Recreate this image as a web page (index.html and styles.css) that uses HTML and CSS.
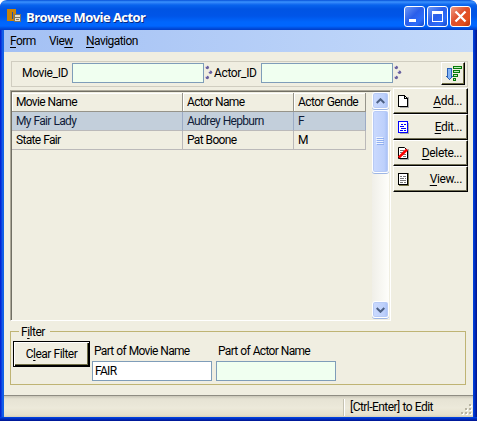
FILE: index.html
```html
<!DOCTYPE html>
<html lang="en">
<head>
<meta charset="utf-8">
<title>Browse Movie Actor</title>
<link rel="stylesheet" href="styles.css">
</head>
<body>
<div class="window">
  <header class="titlebar">
    <svg class="app-icon" width="15" height="15" viewBox="0 0 15 15" shape-rendering="crispEdges"><path fill="#c98209" d="M0 0h9v12H0z"/><path fill="#1a50b0" d="M5 3h1v7H5z"/><path fill="#7d7563" d="M7 5h7v8H7z"/><path fill="#e2ded2" d="M8 6h5v2H8zM8 9h5v3H8z"/><path fill="#777" d="M9 10h3v1H9z"/></svg>
    <h1>Browse Movie Actor</h1>
    <div class="controls">
      <button class="ctl"><svg width="19" height="19" viewBox="0 0 19 19"><path fill="#fff" d="M4 12h7v3H4z"/></svg></button>
      <button class="ctl"><svg width="19" height="19" viewBox="0 0 19 19"><path fill="#fff" fill-rule="evenodd" d="M4 4h11v11H4zM5 7v7h9V7z"/></svg></button>
      <button class="ctl close"><svg width="19" height="19" viewBox="0 0 19 19"><path stroke="#fff" stroke-width="2.3" d="M4.5 4.5l10 10M14.5 4.5l-10 10"/></svg></button>
    </div>
  </header>
  <div class="frame">
    <nav class="menu"><span class="m-form"><u>F</u>orm</span><span class="m-view">Vie<u>w</u></span><span><u>N</u>avigation</span></nav>
    <section class="keys">
      <label class="k-movie">Movie_ID</label><input class="field wide">
      <svg class="dots" width="8" height="16" viewBox="0 0 8 16"><g fill="#6a629f"><circle cx="2.3" cy="2.5" r="1.7"/><circle cx="5.5" cy="7.3" r="1.700"/><circle cx="2.3" cy="12.5" r="1.7"/></g><path fill="#c5c0ec" d="M1 1h1v1H1zM4 6h1v1H4zM1 11h1v1H1z"/></svg>
      <label class="k-actor">Actor_ID</label><input class="field wide">
      <svg class="dots" width="8" height="16" viewBox="0 0 8 16"><g fill="#6a629f"><circle cx="2.3" cy="2.5" r="1.7"/><circle cx="5.5" cy="7.3" r="1.700"/><circle cx="2.3" cy="12.5" r="1.7"/></g><path fill="#c5c0ec" d="M1 1h1v1H1zM4 6h1v1H4zM1 11h1v1H1z"/></svg>
      <button class="sort"><svg width="17" height="16" viewBox="0 0 17 16" shape-rendering="crispEdges"><path fill="#84b4f4" stroke="#2860b8" d="M2.5 2.5h4v8h1l-3 3-3-3h1z"/><path fill="#b8f0b8" stroke="#087808" d="M8.5.5h8v2h-8zM8.5 4.500h6v2h-6zM8.500 8.500h4v2h-4zM8.500 12.500h2v2h-2z"/></svg></button>
    </section>
    <div class="main">
      <div class="grid">
        <div class="table">
          <div class="row head"><span>Movie Name</span><span>Actor Name</span><span class="gender">Actor Gende</span></div>
          <div class="row selected"><span>My Fair Lady</span><span>Audrey Hepburn</span><span>F</span></div>
          <div class="row"><span>State Fair</span><span>Pat Boone</span><span>M</span></div>
        </div>
        <div class="scroll">
          <div class="arrow"><svg width="9" height="6" viewBox="0 0 9 6"><path fill="none" stroke="#4d6185" stroke-width="2" d="M.7 5l3.800-3.800L8.300 5"/></svg></div>
          <div class="thumb"><i></i><i></i><i></i><i></i></div>
          <div class="arrow down"><svg width="9" height="6" viewBox="0 0 9 6"><path fill="none" stroke="#4d6185" stroke-width="2" d="M.7 1l3.800 3.800L8.300 1"/></svg></div>
        </div>
      </div>
      <aside class="actions">
        <button class="action"><svg width="12" height="13" viewBox="0 0 12 13" shape-rendering="crispEdges"><path fill="#aaa" d="M2 2h9v11H2z"/><path fill="#fff" stroke="#000" d="M.5.5h6l3 3v8h-9z"/><path fill="none" stroke="#000" d="M6.500.5v3h3"/></svg><span><u>A</u>dd...</span></button>
        <button class="action"><svg width="12" height="13" viewBox="0 0 12 13" shape-rendering="crispEdges"><path fill="#aaa" d="M2 2h9v11H2z"/><path fill="#fff" stroke="#00f" d="M.5.500h9v11h-9z"/><path stroke="#00f" d="M3 3.500h2M6 3.500h2M2 5.500h4M3 7.500h5M2 9.500h3M6 9.500h2"/></svg><span><u>E</u>dit...</span></button>
        <button class="action"><svg width="12" height="13" viewBox="0 0 12 13"><path fill="#aaa" d="M2 2h9v11H2z"/><path fill="#fff" stroke="#000" d="M.5.500h6l3 3v8h-9z"/><path stroke="#777" d="M2 3.500h4M2 5.500h5M4 7.500h4M5 9.500h3"/><path stroke="#f00" stroke-width="2.500" d="M.8 10.500L9 2.500"/></svg><span><u>D</u>elete...</span></button>
        <button class="action"><svg width="12" height="13" viewBox="0 0 12 13" shape-rendering="crispEdges"><path fill="#77764a" d="M1 0h10v13H1z"/><path fill="#fff" stroke="#000" d="M.5.500h9v11h-9z"/><path stroke="#777" d="M2 3.500h2M5 3.500h3M2 5.500h4M7 5.500h1M2 7.500h6M2 9.500h3M6 9.500h2"/></svg><span><u>V</u>iew...</span></button>
      </aside>
    </div>
    <fieldset class="filter">
      <legend>F<u>i</u>lter</legend>
      <div class="filter-body">
        <button class="clear">C<u>l</u>ear Filter</button>
        <label class="part"><span>Part of Movie Name</span><input class="field white" value="FAIR"></label>
        <label class="part actor"><span>Part of Actor Name</span><input class="field"></label>
      </div>
    </fieldset>
    <footer class="status">
      <span class="hint">[Ctrl-Enter] to Edit</span>
      <svg class="grip" width="12" height="12" viewBox="0 0 12 12" shape-rendering="crispEdges"><path fill="#fff" d="M9 1h2v2H9zM5 5h2v2H5zM9 5h2v2H9zM1 9h2v2H1zM5 9h2v2H5zM9 9h2v2H9z"/><path fill="#b8b4a2" d="M8 0h2v2H8zM4 4h2v2H4zM8 4h2v2H8zM0 8h2v2H0zM4 8h2v2H4zM8 8h2v2H8z"/></svg>
    </footer>
  </div>
</div>
</body>
</html>
```

FILE: styles.css
```css
* { box-sizing: border-box; }
body { margin: 0; background: #fff; font: 12px/14px Roboto, "Liberation Sans", sans-serif; letter-spacing: -.68px; word-spacing: .4px; color: #000; overflow: hidden; }
button, input { font: inherit; letter-spacing: inherit; word-spacing: inherit; color: inherit; margin: 0; padding: 0; border-radius: 0; outline: 0; }
u { text-decoration-thickness: 1px; text-underline-offset: 2px; text-decoration-skip-ink: none; }
svg { display: block; flex: none; }

.window {
  width: 477px; height: 421px; border-radius: 7px 7px 0 0; overflow: hidden;
  background:
    linear-gradient(#0048e8, #0038d0 1px, #0020a8 3px, #00138c) 0 100% / 100% 4px no-repeat,
    linear-gradient(90deg, #0019cf, #0831d9 1px, #166aee 3px, #0855dd) 0 0 / 4px 100% no-repeat,
    linear-gradient(90deg, #0045dc, #0038d4 1px, #001ea0 3px, #00138c) 100% 0 / 4px 100% no-repeat;
}
.titlebar { height: 30px; display: flex; align-items: flex-start; padding: 6px 6px 0 7px; background: linear-gradient(#0650d8 0, #3a94ff 2px, #2a7df6 3px, #0864ed 5px, #0054e3 9px, #0055e8 16px, #0066fc 22px, #0066ff 26px, #0050e0 28px, #003cc8 30px); }
.app-icon { margin-top: 3px; }
h1 { margin: 2px 0 0 4px; font: bold 13px/18px "Open Sans", sans-serif; letter-spacing: -.55px; word-spacing: 0; color: #fff; text-shadow: 1px 1px #092a85; white-space: nowrap; }
.controls { margin-left: auto; display: flex; gap: 2px; }
.ctl { width: 21px; height: 21px; border: 1px solid #fff; border-radius: 3px; background: linear-gradient(135deg, #6d98f5, #2a5eea 45%, #2d6dfa 75%, #1548c8); }
.close { background: linear-gradient(135deg, #ef9a82, #df4f2c 45%, #e4501f 75%, #b9330d); }

.frame { height: 387px; margin: 0 4px 4px; background: #f0eee1; display: flex; flex-direction: column; }
.menu { height: 22px; flex: none; display: flex; padding: 4px 0 0 6px; background: linear-gradient(90deg, #a3c0f4, #c4dafa); letter-spacing: -.55px; }
.m-form { width: 39px; }
.m-view { width: 37px; }

.keys { margin: 9px 0 0 7px; width: 457px; height: 26px; flex: none; border: 1px solid #d0cdc0; display: flex; padding: 1px 2px 0 10px; letter-spacing: -.35px; }
.k-movie { width: 50px; padding-top: 3px; }
.k-actor { width: 48px; padding: 3px 0 0 1px; }
.field { display: block; height: 20px; width: 120px; background: #f0fff0; border: 1px solid #7f9db9; padding: 0 2px; }
.wide { width: 132px; }
.white { background: #fff; }
.dots { margin: 2px 0 0 1px; }
.sort { margin: -1px 0 0 auto; width: 24px; height: 23px; display: flex; align-items: center; justify-content: center; background: #f0eee1; border: 1px solid; border-color: #fff #000 #000 #fff; box-shadow: inset -1px -1px #716f46; }

.main { display: flex; padding: 1px 0 0 6px; height: 234px; flex: none; }
.grid { margin-top: 2px; width: 381px; height: 231px; border: 1px solid; border-color: #aca899 #fff #fff #aca899; box-shadow: inset 1px 1px #716f64; display: flex; justify-content: space-between; padding: 1px; }
.row { display: grid; grid-template-columns: 171px 111px 72px; height: 19px; line-height: 18px; }
.table { padding-top: 1px; }
.row span { border-right: 1px solid #bbb9b9; border-bottom: 1px solid #bbb9b9; padding-left: 4px; white-space: nowrap; }
.row.head span { border-color: #96948a; box-shadow: inset 1px 1px #fff; }
.row .gender { letter-spacing: -.58px; }
.selected { background: #c3cfdb; color: #101c38; }
.row.selected span { border-right-color: #9cabc5; }
.scroll { width: 17px; background: linear-gradient(90deg, #f0efe8, #fefefb); display: flex; flex-direction: column; }
.arrow, .thumb { border: 1px solid #fff; border-radius: 3px; background: linear-gradient(90deg, #cbdafe, #bdd0fb 75%, #a5bef5); box-shadow: 0 1px #9eb6e4, inset 0 0 0 1px #b8cbf6; display: flex; align-items: center; justify-content: center; }
.arrow { height: 17px; flex: none; }
.thumb { height: 63px; flex: none; flex-direction: column; margin-top: 1px; }
.thumb i { width: 7px; height: 1px; margin-bottom: 1px; background: #91aff0; box-shadow: -1px -1px #eef4fe; }
.down { margin-top: auto; margin-bottom: 1px; }
.actions { margin-left: 2px; width: 75px; }
.action { width: 75px; height: 26px; display: flex; align-items: center; padding: 0 5px 0 4px; background: #f0eee1; border: 1px solid; border-color: #fff #000 #000 #fff; box-shadow: inset -1px -1px #716f56; }
.action span { margin-left: auto; letter-spacing: -.35px; }

.filter { margin: 4px 0 0 6px; width: 456px; height: 60px; flex: none; padding: 0 0 0 2px; border: 1px solid #bfb474; min-width: 0; }
.filter legend { height: 12px; padding: 0 5px 0 2px; margin-left: 6px; letter-spacing: -.5px; }
.filter-body { display: flex; padding-top: 4px; }
.clear { width: 77px; height: 26px; background: #f0eee1; border: 1px solid #000; box-shadow: inset 1px 1px #fff, inset -1px -1px #000, inset -2px -2px #716f46; letter-spacing: -.55px; }
.part { width: 120px; margin: 2px 0 0 2px; display: block; white-space: nowrap; }
.part span { display: block; height: 18px; padding: 1px 0 0 2px; }
.actor { margin-left: 4px; }

.status { margin-top: auto; height: 22px; flex: none; display: flex; justify-content: flex-end; position: relative; border-top: 1px solid #8f8d83; background: linear-gradient(#c9c6b8, #e6e3d4 3px, #ece9da 12px, #e5e1cc 19px, #d5cfb7); }
.hint { width: 129px; height: 17px; margin-top: 3px; padding: 1px 0 0 5px; border-left: 1px solid #fff; box-shadow: -1px 0 #c5c2b2; white-space: nowrap; letter-spacing: -.55px; }
.grip { position: absolute; right: 0; bottom: 1px; }
```
